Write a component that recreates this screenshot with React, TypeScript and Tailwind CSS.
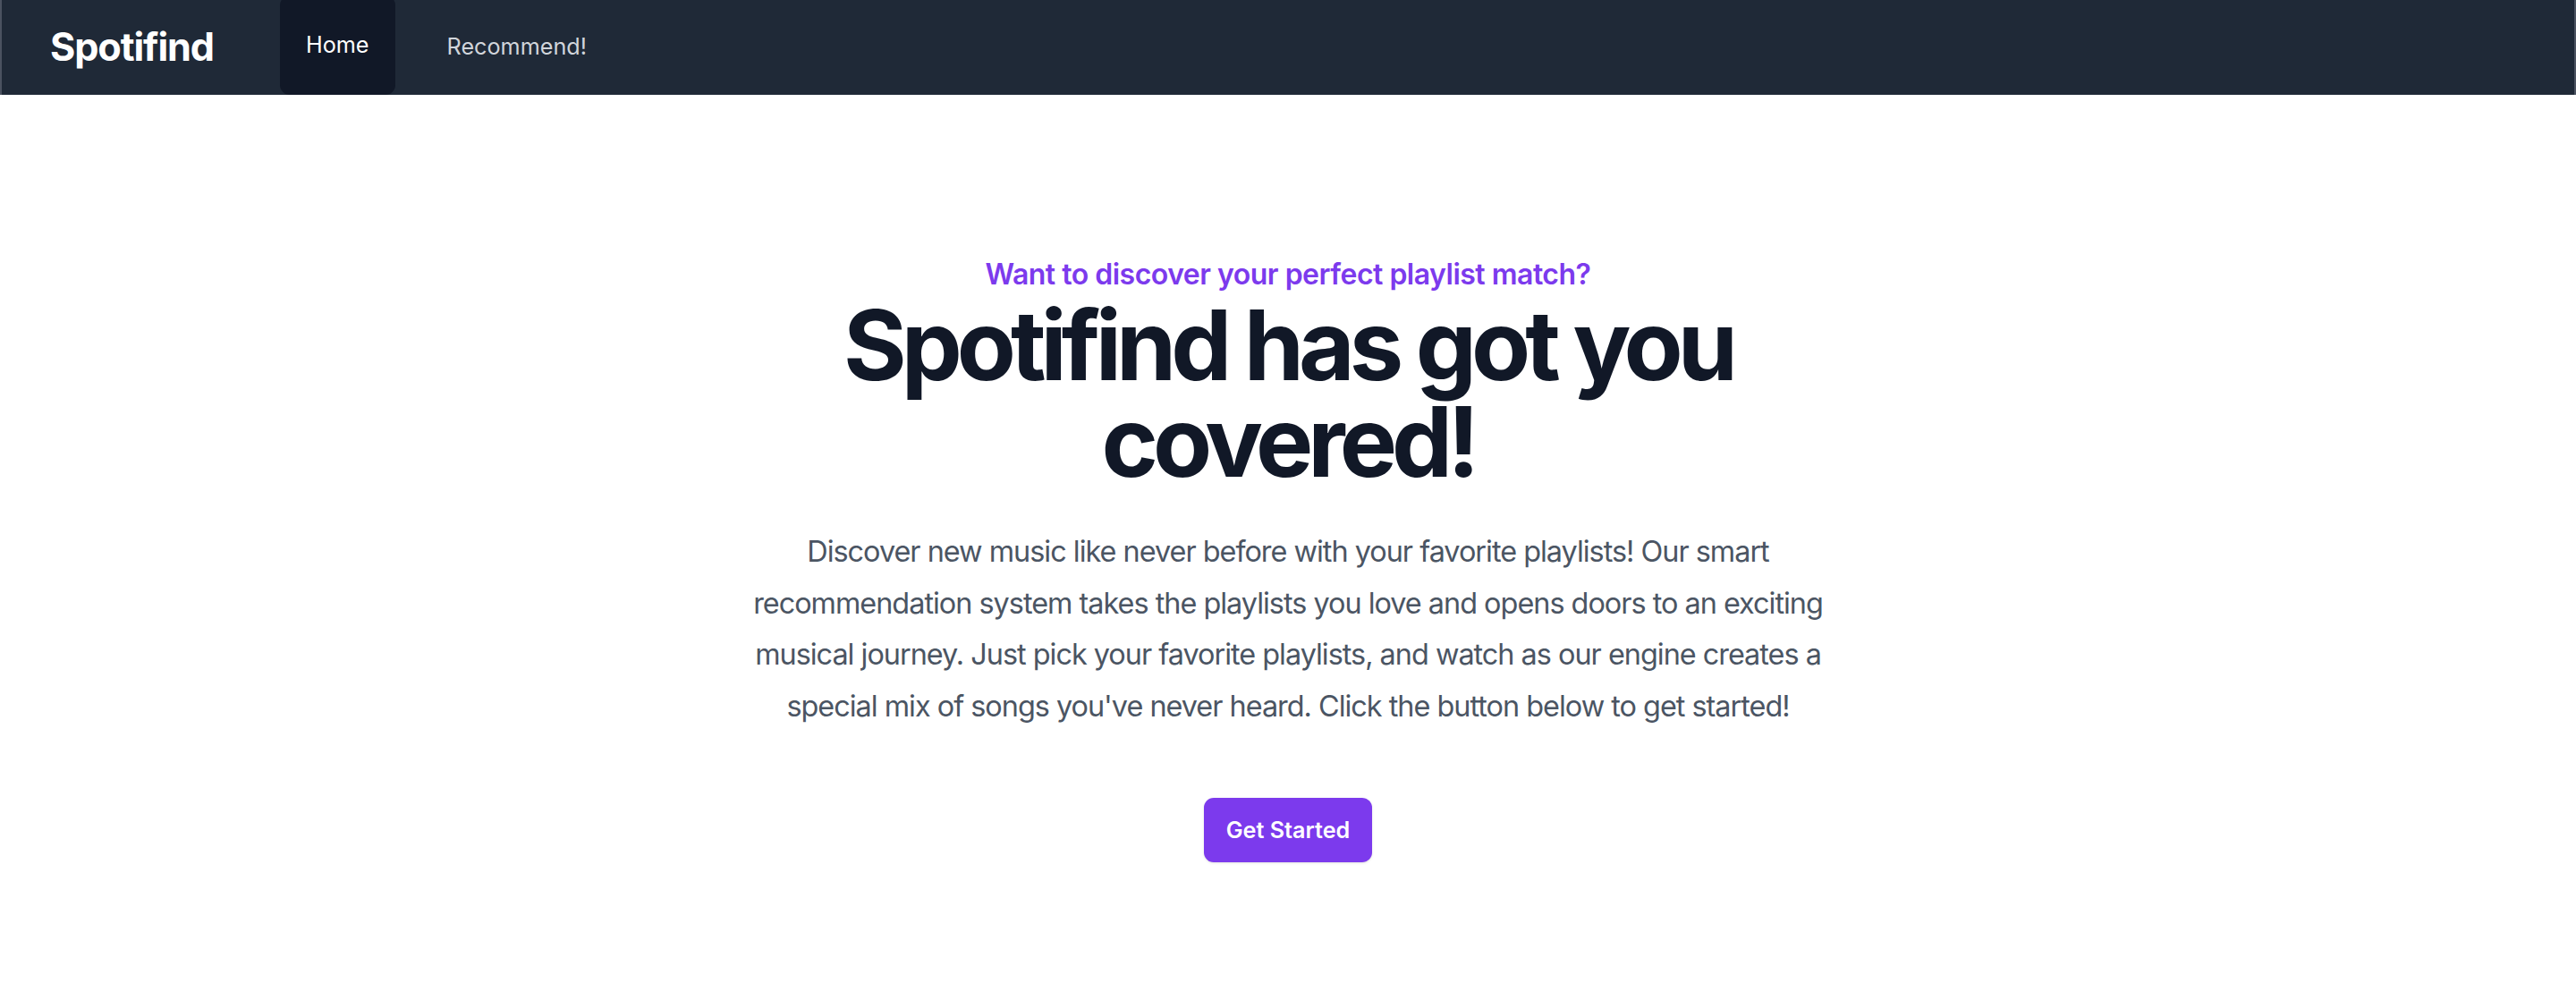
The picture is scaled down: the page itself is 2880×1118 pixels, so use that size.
const navItems = [
  { label: "Home", active: true },
  { label: "Recommend!", active: false },
];

const Navbar = () => {
  return (
    <nav className="flex h-[106px] items-center border-x-2 border-[#4b5260] bg-[#1f2937] pl-[54px]">
      <span className="text-[43.2px] font-bold leading-none tracking-[-1.1px] text-white">
        Spotifind
      </span>
      <div className="ml-[74px] flex h-full items-stretch gap-[29px]">
        {navItems.map((item) => (
          <a
            key={item.label}
            href="#"
            className={
              item.active
                ? "-mt-[5px] flex h-[111px] items-center rounded-[11px] bg-[#111827] px-[29px] text-[25.2px] text-white"
                : "flex items-center rounded-[11px] px-[29px] text-[25.2px] text-[#d1d5db]"
            }
          >
            {item.label}
          </a>
        ))}
      </div>
    </nav>
  );
};

const Hero = () => {
  return (
    <main className="flex flex-col items-center px-6 pt-[176px] text-center">
      <div className="w-full max-w-[1214px]">
        <p className="text-[32px] font-semibold leading-[50px] tracking-[-0.5px] text-[#7c3aed]">
          Want to discover your perfect playlist match?
        </p>
        <h1 className="text-[108px] font-bold leading-none tracking-[-6px] text-[#111827]">
          Spotifind has got you covered!
        </h1>
        <p className="mt-[40px] text-[32.4px] leading-[57.6px] tracking-[-1px] text-[#4b5563]">
          Discover new music like never before with your favorite playlists! Our
          smart recommendation system takes the playlists you love and opens
          doors to an exciting musical journey. Just pick your favorite
          playlists, and watch as our engine creates a special mix of songs
          you've never heard. Click the button below to get started!
        </p>
        <div className="mt-[74px] flex justify-center">
          <button className="rounded-[11px] bg-[#7c3aed] px-[25px] py-[18px] text-[25.2px] font-semibold leading-[36px] text-white shadow-sm">
            Get Started
          </button>
        </div>
      </div>
    </main>
  );
};

export default function App() {
  return (
    <div className="min-h-[1118px] bg-white font-['Inter',sans-serif] antialiased">
      <Navbar />
      <Hero />
    </div>
  );
}
